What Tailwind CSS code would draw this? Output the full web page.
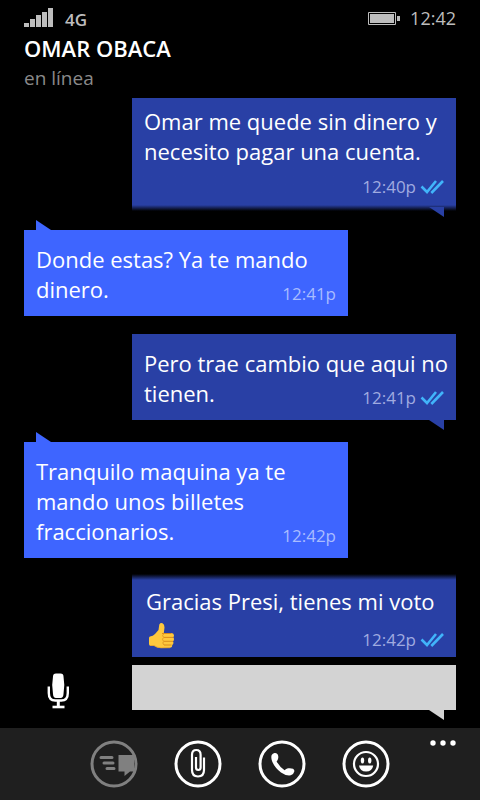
<!DOCTYPE html>
<html lang="es">
<head>
<meta charset="utf-8">
<meta name="viewport" content="width=device-width, initial-scale=1">
<title>Omar Obaca</title>
<script src="https://cdn.jsdelivr.net/npm/@tailwindcss/browser@4"></script>
</head>
<body class="flex min-h-screen flex-col bg-black font-['Open_Sans','Noto_Sans',sans-serif] text-white">

<svg class="hidden" aria-hidden="true">
  <symbol id="ticks" viewBox="0 0 24 16">
    <path d="M1.500 7.500L7 13L16 2M11.300 14L23 2" fill="none" stroke="#41b4fa" stroke-width="2.600"/>
  </symbol>
  <symbol id="tail-down" viewBox="0 0 15 10"><path d="M0 0H15V10Z"/></symbol>
  <symbol id="tail-up" viewBox="0 0 15 10"><path d="M0 0V10H15Z"/></symbol>
</svg>

<header class="px-6">
  <div class="flex h-8 items-center justify-between pt-1 text-[#bdbdbd]">
    <div class="flex items-center gap-3">
      <svg class="h-5 w-[29px]" viewBox="0 0 29 20" fill="currentColor" role="img" aria-label="Señal"><path d="M0 15h5v4H0zM6 11h5v8H6zM12 7h5v12h-5zM18 4h5v15h-5zM24 0h5v19h-5z"/></svg>
      <span class="pt-1 text-[17px] leading-5 font-semibold">4G</span>
    </div>
    <div class="flex items-center gap-[10px]">
      <svg class="h-[13px] w-8" viewBox="0 0 32 13" role="img" aria-label="Batería"><path d="M.5.500h27v12H.500z" fill="none" stroke="currentColor"/><path d="M2 2h24v9H2zM29 4h3v5h-3z" fill="currentColor"/></svg>
      <time class="text-[18px] leading-5">12:42</time>
    </div>
  </div>
  <h1 class="text-[22px] leading-8 font-semibold">OMAR OBACA</h1>
  <p class="text-[19px] leading-7 text-[#8a8a8a]">en línea</p>
</header>

<main class="flex grow flex-col px-6 pt-[6px] text-[22px] leading-[30px] whitespace-nowrap">
  <article class="relative w-3/4 self-end bg-linear-to-t from-transparent to-[#2940a5] to-[6px] px-3 pt-2 pb-[10px]">
    <p>Omar me quede sin dinero y<br>necesito pagar una cuenta.</p>
    <div class="flex items-center justify-end gap-1 pt-[7px] text-[17px] leading-7 text-[#a0abe0]"><time>12:40p</time><svg class="h-4 w-6" role="img" aria-label="Leído"><use href="#ticks"/></svg></div>
    <svg class="absolute right-3 -bottom-[6px] h-[10px] w-[15px] fill-[#2940a5]" aria-hidden="true"><use href="#tail-down"/></svg>
  </article>

  <article class="relative mt-[19px] grid w-3/4 grid-cols-1 bg-[#3e65ff] px-3 pt-[14px] pb-3">
    <p class="[grid-area:1/1]">Donde estas? Ya te mando<br>dinero.</p>
    <time class="self-end justify-self-end text-[17px] leading-5 text-[#a9bcff] [grid-area:1/1]">12:41p</time>
    <svg class="absolute -top-[10px] left-3 h-[10px] w-[15px] fill-[#3e65ff]" aria-hidden="true"><use href="#tail-up"/></svg>
  </article>

  <article class="relative mt-[18px] grid w-3/4 grid-cols-1 self-end bg-[#2940a5] px-3 pt-[14px] pb-3">
    <p class="[grid-area:1/1]">Pero trae cambio que aqui no<br>tienen.</p>
    <div class="flex items-center gap-1 self-end justify-self-end text-[17px] leading-5 text-[#a0abe0] [grid-area:1/1]"><time>12:41p</time><svg class="h-4 w-6" role="img" aria-label="Leído"><use href="#ticks"/></svg></div>
    <svg class="absolute right-3 -bottom-[10px] h-[10px] w-[15px] fill-[#2940a5]" aria-hidden="true"><use href="#tail-down"/></svg>
  </article>

  <article class="relative mt-[22px] grid w-3/4 grid-cols-1 bg-[#3e65ff] px-3 pt-[14px] pb-3">
    <p class="[grid-area:1/1]">Tranquilo maquina ya te<br>mando unos billetes<br>fraccionarios.</p>
    <time class="self-end justify-self-end text-[17px] leading-5 text-[#a9bcff] [grid-area:1/1]">12:42p</time>
    <svg class="absolute -top-[10px] left-3 h-[10px] w-[15px] fill-[#3e65ff]" aria-hidden="true"><use href="#tail-up"/></svg>
  </article>

  <article class="mt-4 w-3/4 self-end bg-linear-to-b from-transparent to-[#2940a5] to-[6px] px-3 pt-3 pb-[5px]">
    <p class="pl-[2px]">Gracias Presi, tienes mi voto</p>
    <div class="flex items-center justify-between pt-1">
      <svg class="ml-1 h-[28px] w-[28px]" viewBox="0 0 28 28" role="img" aria-label="Pulgar arriba">
        <path d="M2 14.500q3-.5 5-2.500l3.500-4 .8-5.500q1-2 3.200-1.300 2 .8 2 4.300l-.7 5.500h7.700q2.500.3 2.500 2.500 0 1.200-.8 1.800.8.700.8 2t-1 2q.6.800.4 2t-1.200 1.700q.3 2.500-2.400 2.800L13 26q-4 0-7-2.200H2q-1-.3-1-2v-5.500q0-1.500 1-1.800z" fill="#ffc83d"/>
        <path d="M14 11.500h9.500M16 15.400h9M16 19.300h9M16 23h7.500" fill="none" stroke="#d98c1c" stroke-width="1"/>
        <path d="M16 11.500q-2.500 1.800-.5 3.900-2 1.800 0 3.900-1.500 1.800.5 3.700" fill="none" stroke="#e39c24" stroke-width="1"/>
        <path d="M2 23.500h4q3 2.200 7 2.300l9-.1" fill="none" stroke="#e8a52c" stroke-width=".8"/>
      </svg>
      <div class="flex items-center gap-1 pt-2 text-[17px] leading-6 text-[#a0abe0]"><time>12:42p</time><svg class="h-4 w-6" role="img" aria-label="Leído"><use href="#ticks"/></svg></div>
    </div>
  </article>

  <form class="mt-2 flex items-start justify-between pb-[18px]">
    <button type="button" aria-label="Grabar mensaje de voz" class="ml-[22px] mt-2">
      <svg class="h-9 w-6" viewBox="0 0 24 36" aria-hidden="true"><path d="M7 3.500Q7 .500 10 .500h4.500q3 0 3 3l.8 8.500-.8 9q-.2 4-3 4H10q-2.800 0-3-4L6.200 12z" fill="#fff"/><path d="M2.800 13.500v6.500q0 7.500 6.500 7.500h6q6.500 0 6.500-7.500v-6.500" fill="none" stroke="#fff" stroke-width="2.400"/><path d="M12.300 27v7" stroke="#fff" stroke-width="3"/><path d="M6.500 34h12" stroke="#fff" stroke-width="2.600"/></svg>
    </button>
    <label class="relative block w-3/4" aria-label="Mensaje">
      <input type="text" aria-label="Mensaje" class="block h-[45px] w-full bg-[#d3d3d3] px-3 text-black">
      <svg class="absolute right-3 -bottom-[10px] h-[10px] w-[15px] fill-[#d3d3d3]" aria-hidden="true"><use href="#tail-down"/></svg>
    </label>
  </form>
</main>

<footer class="grid h-[72px] grid-cols-[1fr_auto_1fr] items-start bg-[#1f1f1f] pt-3">
  <nav class="col-start-2 flex gap-9" aria-label="Acciones">
    <button type="button" disabled aria-label="Enviar">
      <svg class="block size-12 text-[#808080]" viewBox="0 0 48 48" fill="none" stroke="currentColor" aria-hidden="true"><circle cx="24" cy="24" r="22" stroke-width="3"/><path d="M11 17.500h11M14 23h9M17 28.500h7" stroke-width="3" stroke-linecap="round"/><path d="M28.500 15H44v16.500h-4L34.500 36v-4.500h-6z" fill="currentColor" stroke="none"/></svg>
    </button>
    <button type="button" aria-label="Adjuntar">
      <svg class="block size-12" viewBox="0 0 48 48" fill="none" stroke="#fff" aria-hidden="true"><circle cx="24" cy="24" r="22" stroke-width="3"/><path d="M22 17v10.500q0 2.500 2.300 2.500t2.300-2.500V14.800q0-4.800-4.300-4.800T18 14.800v15.200q0 6.500 6 6.500t6-6.500V17.500" stroke-width="2.200"/></svg>
    </button>
    <button type="button" aria-label="Llamar">
      <svg class="block size-12" viewBox="0 0 48 48" fill="none" aria-hidden="true"><circle cx="24" cy="24" r="22" stroke="#fff" stroke-width="3"/><path d="M16.500 13q2.500-.4 3.400 1.800.8 2.200.1 4.200-.6 1.500-1.400 2.500 3.200 5.500 8 8.800 1.400-1.500 3.400-2 3-.4 5 .5 1.800 1 1.200 3-.7 2.800-3.400 3.500-4.800.8-9.800-2.800-6.500-5-9-11.500-1.200-3.500-.3-6 .9-1.700 2.800-2z" fill="#fff"/></svg>
    </button>
    <button type="button" aria-label="Emoticonos">
      <svg class="block size-12" viewBox="0 0 48 48" fill="none" stroke="#fff" aria-hidden="true"><circle cx="24" cy="24" r="22" stroke-width="3"/><circle cx="24" cy="24" r="12" stroke-width="2.200"/><g fill="#fff" stroke="none"><ellipse cx="20.500" cy="20.500" rx="1.700" ry="3"/><ellipse cx="27.700" cy="20.500" rx="1.700" ry="3"/><path d="M17 25.500h14.200q-1 6-7.100 6t-7.100-6z"/></g></svg>
    </button>
  </nav>
  <button type="button" aria-label="Más" class="mr-6 justify-self-end">
    <svg class="block h-[6px] w-[26px]" viewBox="0 0 26 6" fill="#fff" aria-hidden="true"><circle cx="3" cy="3" r="2.700"/><circle cx="13" cy="3" r="2.700"/><circle cx="23" cy="3" r="2.700"/></svg>
  </button>
</footer>
</body>
</html>
